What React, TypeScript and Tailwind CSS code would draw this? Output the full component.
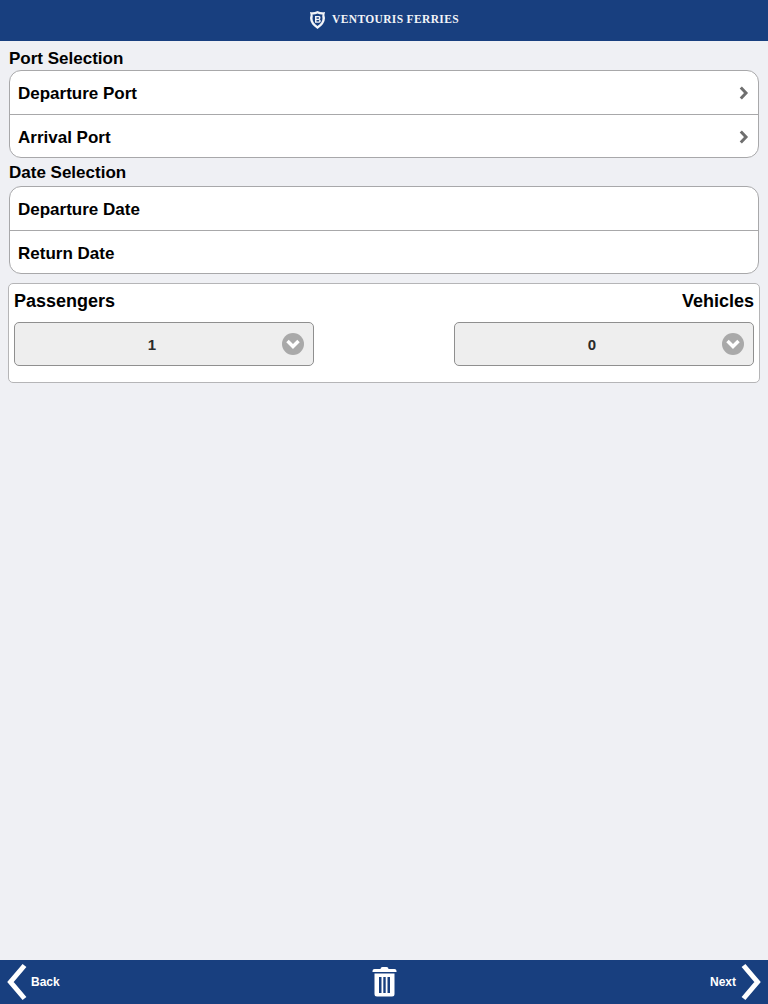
const sans = "font-['Liberation_Sans',Arial,sans-serif]";

function Row({ label, arrow, last }: { label: string; arrow?: boolean; last?: boolean }) {
  return (
    <div className={`flex items-center justify-between pl-[8px] pr-[9px] pt-[3px] ${last ? 'h-[42px]' : 'h-[44px] border-b border-[#a8a8aa]'}`}>
      <span className="text-[17px] font-bold text-black">{label}</span>
      {arrow && (
        <svg width="10" height="14" viewBox="0 0 10 14" fill="none" className={last ? 'mt-[-1px]' : 'mt-[-3px]'}>
          <path d="M1.800 1.500 L7 7 L1.800 12.500" stroke="#6f6f6f" strokeWidth="3" />
        </svg>
      )}
    </div>
  );
}

function Select({ value }: { value: string }) {
  return (
    <div className="relative flex h-[44px] w-[300px] items-center justify-center rounded-[5px] border border-[#8f8f8f] bg-[#eeeeee] pr-[24px] pt-[2px]">
      <span className="text-[15px] font-bold text-[#2a2a2a]">{value}</span>
      <span className="absolute right-[9px] top-[10px] flex h-[22px] w-[22px] items-center justify-center rounded-full bg-[#a9a9a9]">
        <svg width="16" height="11" viewBox="0 0 16 11" fill="none">
          <path d="M2.500 2 L8 7.500 L13.500 2" stroke="#fff" strokeWidth="3.500" />
        </svg>
      </span>
    </div>
  );
}

export default function App() {
  return (
    <div className={`flex h-screen flex-col overflow-hidden bg-[#eff0f4] ${sans}`}>
      {/* header */}
      <header className="flex h-[41px] shrink-0 items-center justify-center gap-[6px] bg-[#183f7f] pb-[1px]">
        <svg width="17" height="20" viewBox="0 0 17 20">
          <path d="M1 2 Q4.500 3 8.500 1 Q12.500 3 16 2 Q14.800 5 16 8 Q16 14 8.500 19 Q1 14 1 8 Q2.200 5 1 2 Z" fill="#f2f4f8" />
          <path d="M3.500 4.500 Q6 4.800 8.500 3.500 Q11 4.800 13.500 4.500 Q13 6 13.500 8.500 Q13.500 12.500 8.500 16 Q3.500 12.500 3.500 8.500 Q4 6 3.500 4.500 Z" fill="#183f7f" />
          <path d="M6 6 H10.200 Q11.500 6 11.500 7.700 Q11.500 8.800 10.600 9.200 Q11.800 9.600 11.800 11 Q11.800 12.800 10.200 12.800 H6 Z M7.500 7.200 V8.800 H9.500 Q10.100 8.800 10.100 8 Q10.100 7.200 9.500 7.200 Z M7.500 10 V11.600 H9.700 Q10.300 11.600 10.300 10.800 Q10.300 10 9.700 10 Z" fill="#f2f4f8" fillRule="evenodd" />
        </svg>
        <span className="text-[11.500px] font-bold tracking-[0.35px] text-[#f2f4f8] font-['Liberation_Serif',serif]">VENTOURIS FERRIES</span>
      </header>

      <main className="flex-1 px-[8px]">
        <div className="px-[1px]">
          <h2 className="mt-[8px] h-[21px] text-[17px] leading-[19px] font-bold text-black">Port Selection</h2>
          <div className="overflow-hidden rounded-[12px] border border-[#a8a8aa] bg-white">
            <Row label="Departure Port" arrow />
            <Row label="Arrival Port" arrow last />
          </div>
          <h2 className="mt-[5px] h-[23px] text-[17px] leading-[19px] font-bold text-black">Date Selection</h2>
          <div className="overflow-hidden rounded-[12px] border border-[#a8a8aa] bg-white">
            <Row label="Departure Date" />
            <Row label="Return Date" last />
          </div>
        </div>

        <section className="mt-[9px] h-[100px] rounded-[5px] border border-[#b5b5b7] bg-white px-[5px] pt-[7px]">
          <div className="flex justify-between">
            <div>
              <div className="mb-[10px] h-[21px] text-[18px] leading-[21px] font-bold text-black">Passengers</div>
              <Select value="1" />
            </div>
            <div>
              <div className="mb-[10px] h-[21px] text-right text-[18px] leading-[21px] font-bold text-black">Vehicles</div>
              <Select value="0" />
            </div>
          </div>
        </section>
      </main>

      {/* footer */}
      <footer className="flex h-[44px] shrink-0 items-center justify-between bg-[#183f7f] text-white">
        <div className="flex items-center gap-[4px] pl-[7px]">
          <svg width="20" height="38" viewBox="0 0 20 38" fill="none">
            <path d="M17.500 2.500 L3.500 19 L17.500 35.500" stroke="#fff" strokeWidth="5" />
          </svg>
          <span className="text-[12px] font-bold">Back</span>
        </div>
        <svg width="25" height="31" viewBox="0 0 24 31" className="ml-[-1px] mt-[-1px]">
          <path d="M8 3 Q8 1 10 1 H14 Q16 1 16 3 H22 Q24 3 24 5 V6 H0 V5 Q0 3 2 3 Z" fill="#fff" />
          <path fillRule="evenodd" d="M2 7.500 H22 V28 Q22 30.500 19.500 30.500 H4.500 Q2 30.500 2 28 Z M6.500 11 V27 H9 V11 Z M10.800 11 V27 H13.200 V11 Z M15 11 V27 H17.500 V11 Z" fill="#fff" />
        </svg>
        <div className="flex items-center gap-[5px] pr-[7px]">
          <span className="text-[12px] font-bold">Next</span>
          <svg width="20" height="38" viewBox="0 0 20 38" fill="none">
            <path d="M2.500 2.500 L16.500 19 L2.500 35.500" stroke="#fff" strokeWidth="5" />
          </svg>
        </div>
      </footer>
    </div>
  );
}
